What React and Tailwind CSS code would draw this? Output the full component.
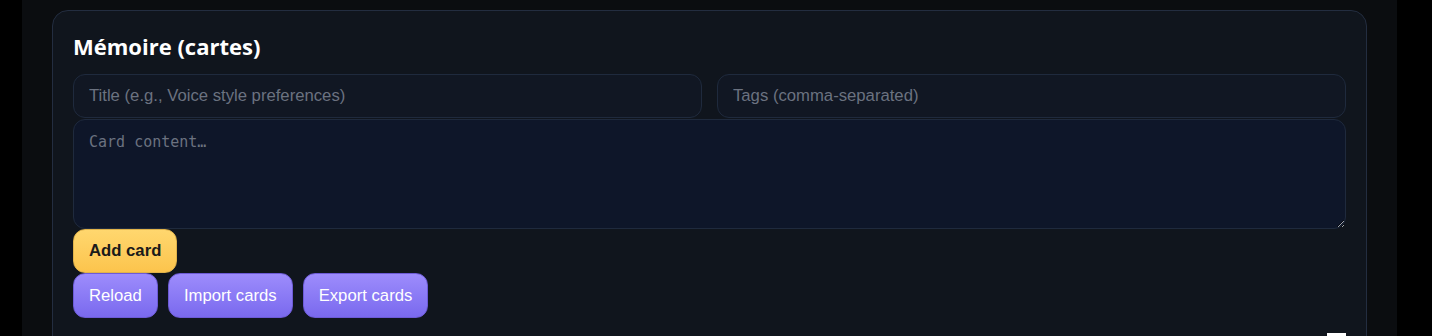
export default function App() {
  return (
    <div className="w-[1432px] h-[336px] bg-black overflow-hidden">
      <div className="ml-[22px] w-[1375px] h-full bg-[#0b0d10] px-[30px] pt-[10px]">
        <div className="rounded-[16px] border border-[#232d40] bg-[#10151d] px-[20px] pt-[20px] pb-[20px]">
          <h2
            className="text-[22px] leading-[30px] font-bold text-white mb-[13px]"
            style={{ fontFamily: '"Segoe UI", "Open Sans", "Noto Sans", sans-serif' }}
          >
            Mémoire (cartes)
          </h2>
          <div className="flex gap-[15px]" style={{ fontFamily: '"Liberation Sans", Arial, sans-serif' }}>
            <input
              className="flex-1 h-[44px] rounded-[12px] border border-[#1f2a3d] bg-[#111723] px-[15px] text-[16.7px] text-white placeholder:text-[#6b7280] outline-none"
              placeholder="Title (e.g., Voice style preferences)"
            />
            <input
              className="flex-1 h-[44px] rounded-[12px] border border-[#1f2a3d] bg-[#111723] px-[15px] text-[16.7px] text-white placeholder:text-[#6b7280] outline-none"
              placeholder="Tags (comma-separated)"
            />
          </div>
          <textarea
            className="block w-full h-[110px] mt-[1px] rounded-[12px] border border-[#1f2a3d] bg-[#0e1629] px-[15px] pt-[11px] pb-[9px] text-[15px] leading-[22px] text-white placeholder:text-[#6b7280] outline-none"
            style={{ fontFamily: 'Consolas, "DejaVu Sans Mono", "Liberation Mono", monospace' }}
            placeholder="Card content…"
          />
          <div style={{ fontFamily: '"Liberation Sans", Arial, sans-serif' }}>
            <button className="h-[44px] px-[15px] rounded-[12px] border border-[#e0b24a] bg-gradient-to-b from-[#ffd76e] to-[#fcc44c] text-[16.7px] font-bold text-[#1a1a1a]">
              Add card
            </button>
            <div className="flex gap-[10px]">
              <button className="h-[45px] px-[15px] rounded-[12px] border border-[#6d5bd6] bg-gradient-to-b from-[#9d8cfc] to-[#7a69ee] text-[16.7px] text-white">
                Reload
              </button>
              <button className="h-[45px] px-[15px] rounded-[12px] border border-[#6d5bd6] bg-gradient-to-b from-[#9d8cfc] to-[#7a69ee] text-[16.7px] text-white">
                Import cards
              </button>
              <button className="h-[45px] px-[15px] rounded-[12px] border border-[#6d5bd6] bg-gradient-to-b from-[#9d8cfc] to-[#7a69ee] text-[16.7px] text-white">
                Export cards
              </button>
            </div>
          </div>
          <div className="flex justify-end mt-[15px]">
            <div className="w-[19px] h-[20px] bg-white" />
          </div>
        </div>
      </div>
    </div>
  );
}
